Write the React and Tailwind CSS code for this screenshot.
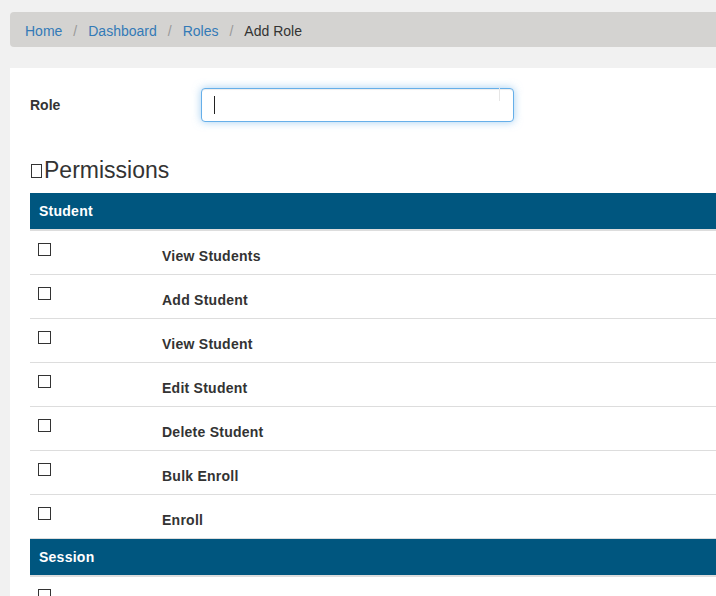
import React from "react";

const studentPerms = [
  "View Students",
  "Add Student",
  "View Student",
  "Edit Student",
  "Delete Student",
  "Bulk Enroll",
  "Enroll",
];

function Box() {
  return <span className="block w-[13px] h-[13px] border border-[#333] bg-white" />;
}

function PermRow({ label, first }) {
  return (
    <div className={`flex ${first ? "h-[43px]" : "h-[44px] border-t border-[#ddd]"}`}>
      <div className="w-[132px] pl-[8px] pt-[12px]">
        <Box />
      </div>
      <div className="pt-[15px] leading-[20px] text-[14px] font-bold tracking-[0.25px] text-[#333]">
        {label}
      </div>
    </div>
  );
}

function Header({ title, top }) {
  return (
    <div className={`${top ? "border-t border-[#ddd]" : ""}`}>
      <div className="h-[36px] bg-[#00567f] flex items-center pl-[9px] text-white text-[14px] font-bold tracking-[0.25px]">
        {title}
      </div>
      <div className="h-[2px] bg-[#ddd]" />
    </div>
  );
}

export default function App() {
  return (
    <div
      className="h-[596px] overflow-hidden bg-[#f1f1f1]"
      style={{ fontFamily: '"Liberation Sans", Arial, sans-serif' }}
    >
      <div className="w-[780px] pl-[10px] pt-[12px]">
        <nav className="h-[35px] rounded-[4px] bg-[#d4d3d1] flex items-center pl-[15px] pt-[3px] text-[14px]">
          <span className="text-[#337ab7]">Home</span>
          <span className="text-[#999] px-[11px]">/</span>
          <span className="text-[#337ab7]">Dashboard</span>
          <span className="text-[#999] px-[11px]">/</span>
          <span className="text-[#337ab7]">Roles</span>
          <span className="text-[#999] px-[11px]">/</span>
          <span className="text-[#333]">Add Role</span>
        </nav>

        <div className="mt-[21px] bg-white pl-[20px] pt-[20px] h-[560px]">
          <div className="flex items-center">
            <label className="w-[171px] text-[14px] font-bold text-[#333]">Role</label>
            <div className="relative w-[313px] h-[34px] rounded-[4px] border border-[#66afe9] bg-white shadow-[inset_0_1px_1px_rgba(0,0,0,0.075),0_0_8px_rgba(102,175,233,0.6)]">
              <span className="absolute left-[12px] top-[7px] w-[1px] h-[18px] bg-[#222]" />
              <span className="absolute left-[297px] top-[-1px] w-[1px] h-[13px] bg-[#e6e6e6]" />
            </div>
          </div>

          <h3 className="mt-[35px] mb-[10px] flex items-baseline text-[23px] leading-[26px] text-[#333]">
            <span className="inline-block w-[11px] h-[14px] border border-[#333] mr-[2px] ml-[1px]" />
            Permissions
          </h3>

          <div>
            <Header title="Student" />
            {studentPerms.map((p, i) => (
              <PermRow key={p} label={p} first={i === 0} />
            ))}
            <Header title="Session" top />
            <PermRow label="" first />
          </div>
        </div>
      </div>
    </div>
  );
}
